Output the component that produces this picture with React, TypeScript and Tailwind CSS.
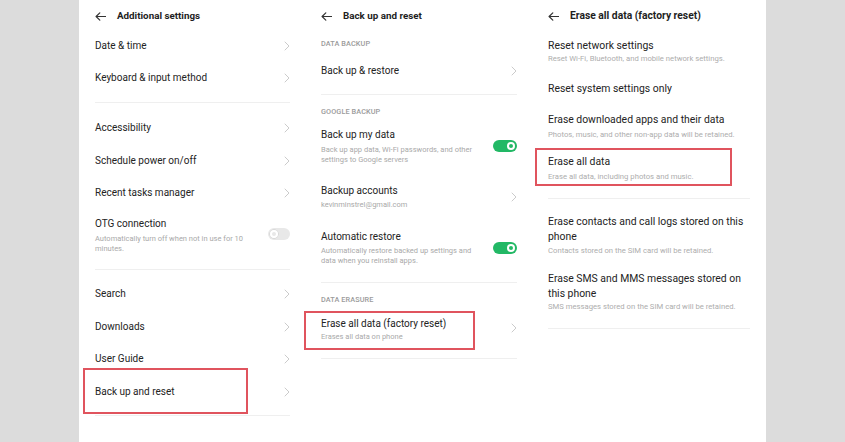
import React from "react";

function Arrow() {
  return (
    <svg width="11" height="9" viewBox="0 0 11 9" className="shrink-0">
      <path d="M10.5 4.5H1.2M4.8 0.8L1.1 4.5l3.7 3.7" fill="none" stroke="#333" strokeWidth="1.2" strokeLinecap="round" strokeLinejoin="round" />
    </svg>
  );
}

function Chev() {
  return (
    <svg width="6" height="10" viewBox="0 0 6 10" className="shrink-0">
      <path d="M1 1l4 4-4 4" fill="none" stroke="#cbcbcb" strokeWidth="1" strokeLinecap="round" strokeLinejoin="round" />
    </svg>
  );
}

function ToggleOff() {
  return (
    <div className="w-[22px] h-[12px] rounded-full bg-[#e8e8e8] flex items-center pl-[2px] shrink-0">
      <div className="w-[8px] h-[8px] rounded-full border-[2px] border-white shadow-[0_0_0_0.5px_#c8c8c8]" />
    </div>
  );
}

function ToggleOn() {
  return (
    <div className="w-[24px] h-[12px] rounded-full bg-[#22b865] flex items-center justify-end pr-[2px] shrink-0">
      <div className="w-[8px] h-[8px] rounded-full border-[2px] border-white" />
    </div>
  );
}

function Header({ title, size, h }: { title: string; size: string; h: string }) {
  return (
    <div className={`${h} flex items-center gap-[11px]`}>
      <Arrow />
      <span className={`${size} font-bold text-[#1e1e1e] whitespace-nowrap`}>{title}</span>
    </div>
  );
}

function NavRow({ label, h }: { label: string; h: string }) {
  return (
    <div className={`${h} flex items-center justify-between`}>
      <span className="text-[10px] leading-[14px] text-[#232323] whitespace-nowrap">{label}</span>
      <Chev />
    </div>
  );
}

function Divider({ mt }: { mt: string }) {
  return <div className={`${mt} h-px bg-[#efefef] shrink-0`} />;
}

function Label({ text, mt }: { text: string; mt: string }) {
  return (
    <div className={`${mt} h-[16px] flex items-center text-[7.3px] font-medium tracking-[0.1px] text-[#9b9b9b] whitespace-nowrap`}>
      {text}
    </div>
  );
}

const sub = "text-[7.5px] leading-[10px] text-[#a9a9a9] whitespace-nowrap";
const sub3 = "text-[7.7px] leading-[10px] text-[#adadad] whitespace-nowrap";
const t3 = "text-[10.4px] leading-[15px] text-[#232323] whitespace-nowrap";
const t = "text-[10px] leading-[14px] text-[#232323] whitespace-nowrap";

export default function App() {
  return (
    <div className="flex h-[442px] w-[845px] overflow-hidden bg-white font-['Roboto','Liberation_Sans',sans-serif]">
      <div className="w-[79px] shrink-0 bg-[#dcdcdc]" />

      {/* Panel 1 */}
      <div className="w-[221px] shrink-0 pl-[16px] pr-[10px] flex flex-col">
        <Header title="Additional settings" size="text-[9.8px]" h="h-[30px] pt-[3px]" />
        <NavRow label="Date & time" h="h-[32px]" />
        <NavRow label="Keyboard & input method" h="h-[32px]" />
        <Divider mt="mt-[8px]" />
        <div className="h-[9px]" />
        <NavRow label="Accessibility" h="h-[32px]" />
        <NavRow label="Schedule power on/off" h="h-[33px]" />
        <NavRow label="Recent tasks manager" h="h-[32px]" />
        <div className="h-[50px] flex items-center justify-between">
          <div className="self-start pt-[8px]">
            <div className={t}>OTG connection</div>
            <div className={`mt-[3px] ${sub}`}>
              Automatically turn off when not in use for 10
              <br />
              minutes.
            </div>
          </div>
          <ToggleOff />
        </div>
        <Divider mt="mt-[10px]" />
        <div className="h-[8px]" />
        <NavRow label="Search" h="h-[32px]" />
        <NavRow label="Downloads" h="h-[33px]" />
        <NavRow label="User Guide" h="h-[32px]" />
        <div className="relative h-[33px] flex items-center justify-between">
          <span className={t}>Back up and reset</span>
          <Chev />
          <div className="absolute left-[-12px] top-[-7px] w-[165px] h-[46px] border-[2px] border-[#e0545e]" />
        </div>
        <Divider mt="mt-[7px]" />
      </div>

      {/* Panel 2 */}
      <div className="w-[230px] shrink-0 pl-[21px] pr-[13px] flex flex-col">
        <Header title="Back up and reset" size="text-[9.8px]" h="h-[30px] pt-[3px]" />
        <Label text="DATA BACKUP" mt="mt-[6px]" />
        <NavRow label="Back up & restore" h="h-[37px]" />
        <Divider mt="mt-[5px]" />
        <Label text="GOOGLE BACKUP" mt="mt-[9px]" />
        <div className="h-[52px] flex items-center justify-between">
          <div className="self-start pt-[8px]">
            <div className={t}>Back up my data</div>
            <div className={`mt-[3px] ${sub} leading-[9.5px]`}>
              Back up app data, Wi-Fi passwords, and other
              <br />
              settings to Google servers
            </div>
          </div>
          <ToggleOn />
        </div>
        <div className="h-[50px] flex items-center justify-between">
          <div className="self-start pt-[12px]">
            <div className={t}>Backup accounts</div>
            <div className={`mt-[2px] ${sub}`}>kevinminstrel@gmail.com</div>
          </div>
          <Chev />
        </div>
        <div className="h-[52px] flex items-center justify-between">
          <div className="self-start pt-[8px]">
            <div className={t}>Automatic restore</div>
            <div className={`mt-[2px] ${sub}`}>
              Automatically restore backed up settings and
              <br />
              data when you reinstall apps.
            </div>
          </div>
          <ToggleOn />
        </div>
        <Divider mt="mt-[8px]" />
        <Label text="DATA ERASURE" mt="mt-[9px]" />
        <div className="relative h-[40px] flex items-center justify-between">
          <div className="self-start pt-[9px]">
            <div className={t}>Erase all data (factory reset)</div>
            <div className={`mt-[1px] ${sub}`}>Erases all data on phone</div>
          </div>
          <Chev />
          <div className="absolute left-[-17px] top-[3px] w-[171px] h-[39px] border-[2px] border-[#e0545e]" />
        </div>
        <Divider mt="mt-[10px]" />
      </div>

      {/* Panel 3 */}
      <div className="w-[236px] shrink-0 pl-[18px] pr-[16px] flex flex-col">
        <Header title="Erase all data (factory reset)" size="text-[10.3px]" h="h-[29px] pt-[3px]" />
        <div className="pt-[9px]">
          <div className={t3}>Reset network settings</div>
          <div className={`mt-[1px] ${sub3}`}>Reset Wi-Fi, Bluetooth, and mobile network settings.</div>
        </div>
        <div className={`mt-[17px] ${t3}`}>Reset system settings only</div>
        <div className="mt-[16px]">
          <div className={t3}>Erase downloaded apps and their data</div>
          <div className={`mt-[3px] ${sub3}`}>Photos, music, and other non-app data will be retained.</div>
        </div>
        <div className="relative mt-[14px]">
          <div className={t3}>Erase all data</div>
          <div className={`mt-[3px] ${sub3}`}>Erase all data, including photos and music.</div>
          <div className="absolute left-[-13px] top-[-6px] w-[197px] h-[38px] border-[2px] border-[#e0545e]" />
        </div>
        <Divider mt="mt-[16px]" />
        <div className="mt-[15px]">
          <div className={t3}>
            Erase contacts and call logs stored on this
            <br />
            phone
          </div>
          <div className={`mt-[2px] ${sub3}`}>Contacts stored on the SIM card will be retained.</div>
        </div>
        <div className="mt-[15px]">
          <div className={t3}>
            Erase SMS and MMS messages stored on
            <br />
            this phone
          </div>
          <div className={`mt-[1px] ${sub3}`}>SMS messages stored on the SIM card will be retained.</div>
        </div>
        <Divider mt="mt-[16px]" />
      </div>

      <div className="w-[79px] shrink-0 bg-[#dcdcdc]" />
    </div>
  );
}
